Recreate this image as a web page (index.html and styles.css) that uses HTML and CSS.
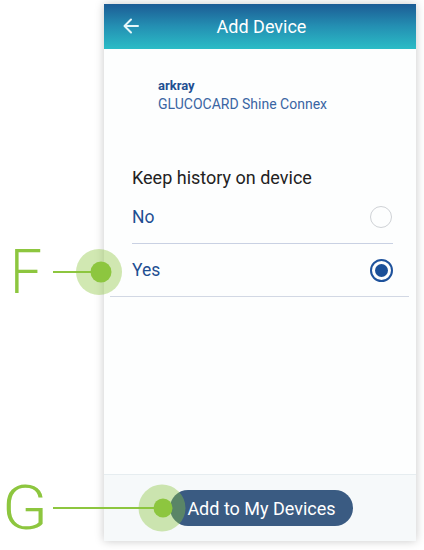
FILE: index.html
```html
<!DOCTYPE html>
<html>
<head>
<meta charset="utf-8">
<link rel="stylesheet" href="styles.css">
</head>
<body>
<div class="phone">
  <header class="appbar">
    <svg class="back" width="16" height="16" viewBox="0 0 16 16"><path d="M15 8H2M8 1.5L1.5 8 8 14.5" fill="none" stroke="#e6f6f9" stroke-width="2" stroke-linecap="round" stroke-linejoin="round"/></svg>
    <h1 class="title">Add Device</h1>
  </header>
  <main class="content">
    <div class="device">
      <div class="brand">arkray</div>
      <div class="model">GLUCOCARD Shine Connex</div>
    </div>
    <div class="question">Keep history on device</div>
    <div class="options">
      <div class="option">
        <span class="label">No</span>
        <span class="radio"></span>
      </div>
      <div class="option wide">
        <span class="label">Yes</span>
        <span class="radio checked"></span>
      </div>
    </div>
  </main>
  <footer class="footer">
    <button class="add-btn">Add to My Devices</button>
  </footer>
</div>
<svg class="callouts" width="424" height="550" viewBox="0 0 424 550">
  <text class="callout-letter" x="10" y="293" textLength="32" lengthAdjust="spacingAndGlyphs">F</text>
  <line x1="53" y1="272" x2="100" y2="272" stroke="#8dc63f" stroke-width="2"/>
  <circle cx="99" cy="272" r="23" fill="#8dc63f" fill-opacity="0.4"/>
  <circle cx="101" cy="272" r="10.5" fill="#8dc63f"/>
  <text class="callout-letter" x="2" y="529" textLength="46" lengthAdjust="spacingAndGlyphs">G</text>
  <line x1="53" y1="508" x2="162" y2="508" stroke="#8dc63f" stroke-width="2"/>
  <circle cx="162" cy="508" r="23.5" fill="#8dc63f" fill-opacity="0.4"/>
  <circle cx="163" cy="508" r="9.5" fill="#8dc63f"/>
</svg>
</body>
</html>
```

FILE: styles.css
```css
* { box-sizing: border-box; }
html, body { margin: 0; padding: 0; background: #ffffff; }
body {
  width: 424px;
  height: 550px;
  position: relative;
  overflow: hidden;
  font-family: Roboto, "Liberation Sans", sans-serif;
}
.phone {
  margin: 4px 0 0 104px;
  width: 312px;
  height: 537px;
  display: flex;
  flex-direction: column;
  background: #fdfefe;
  box-shadow: 0 0 9px rgba(0, 0, 0, 0.22);
}
.appbar {
  height: 45px;
  flex: none;
  display: flex;
  align-items: center;
  justify-content: center;
  position: relative;
  background: linear-gradient(to bottom, #1c5c95 0%, #2490b3 50%, #2bbcc6 100%);
}
.back {
  position: absolute;
  left: 19px;
  top: 14px;
}
.title {
  margin: 0;
  font-size: 18px;
  font-weight: 400;
  color: #ffffff;
  line-height: 22px;
  padding-left: 3px;
}
.content {
  flex: 1;
  padding: 28px 23px 0 28px;
}
.device {
  padding-left: 26px;
}
.brand {
  font-size: 13px;
  font-weight: 700;
  line-height: 18px;
  color: #1f4f92;
}
.model {
  font-size: 14px;
  line-height: 18px;
  color: #3a65a3;
}
.question {
  margin-top: 55px;
  font-size: 18px;
  line-height: 20px;
  color: #222222;
}
.options {
  margin-top: 3px;
}
.option {
  height: 53px;
  display: flex;
  align-items: center;
  justify-content: space-between;
  border-bottom: 1px solid #c9d1e3;
}
.option.wide {
  margin-left: -22px;
  padding-left: 22px;
  margin-right: -16px;
  padding-right: 16px;
  border-bottom-color: #d2d8e4;
}
.label {
  font-size: 17.5px;
  color: #1f4f92;
}
.radio {
  width: 22px;
  height: 22px;
  margin-right: 1px;
  border-radius: 50%;
  border: 1.5px solid #cfd2d6;
  display: flex;
  align-items: center;
  justify-content: center;
}
.radio.checked {
  width: 23px;
  height: 23px;
  margin-right: 0;
  border: 2px solid #1e529c;
}
.radio.checked::after {
  content: "";
  width: 13px;
  height: 13px;
  border-radius: 50%;
  background: #1a4f98;
}
.footer {
  height: 67px;
  flex: none;
  display: flex;
  align-items: center;
  justify-content: center;
  background: #f6f9fa;
  border-top: 1px solid #e6edf0;
  padding-left: 3px;
}
.add-btn {
  height: 36px;
  padding: 0 17px;
  border: none;
  border-radius: 18px;
  background: #3a5b82;
  color: #ffffff;
  font-family: Roboto, "Liberation Sans", sans-serif;
  font-size: 18px;
}
.callouts {
  position: absolute;
  left: 0;
  top: 0;
  pointer-events: none;
}
.callout-letter {
  font-family: Roboto, "Liberation Sans", sans-serif;
  font-weight: 300;
  font-size: 61px;
  fill: #8dc63f;
}
```
